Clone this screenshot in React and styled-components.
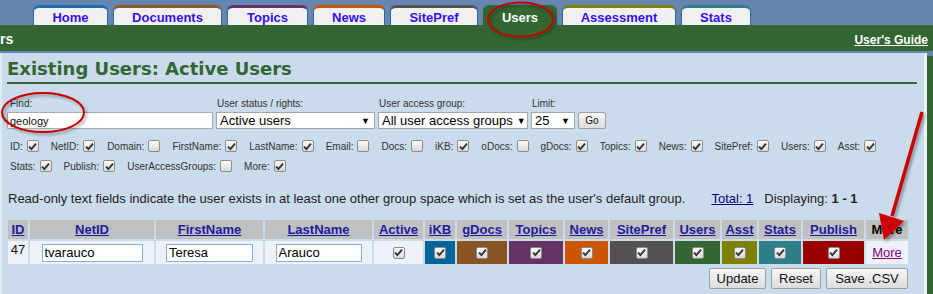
import React from 'react';
import styled, { createGlobalStyle } from 'styled-components';

const GlobalStyle = createGlobalStyle`
  body { margin:0; font-family:"Liberation Sans", Arial, sans-serif; background:#6685b1; }
`;

const tabs = [
  { name: 'Home', color: '#1f6ea8', w: 75 },
  { name: 'Documents', color: '#8b5a2b', w: 109 },
  { name: 'Topics', color: '#663366', w: 81 },
  { name: 'News', color: '#cc5500', w: 72 },
  { name: 'SitePref', color: '#555555', w: 88 },
  { name: 'Users', color: '#336633', w: 74, active: true },
  { name: 'Assessment', color: '#808000', w: 114 },
  { name: 'Stats', color: '#2f7f8c', w: 70 },
];

const toggles = [
  ['ID', true], ['NetID', true], ['Domain', false], ['FirstName', true], ['LastName', true],
  ['Email', false], ['Docs', false], ['iKB', true], ['oDocs', false], ['gDocs', true],
  ['Topics', true], ['News', true], ['SitePref', true], ['Users', true], ['Asst', true],
  ['Stats', true], ['Publish', true], ['UserAccessGroups', false], ['More', true],
];

const cols = [
  { key: 'ID', w: 20 },
  { key: 'NetID', w: 124, input: 'tvarauco', iw: 101 },
  { key: 'FirstName', w: 107, input: 'Teresa', iw: 87 },
  { key: 'LastName', w: 107, input: 'Arauco', iw: 86 },
  { key: 'Active', w: 49, check: true },
  { key: 'iKB', w: 30, check: true, bg: '#006699' },
  { key: 'gDocs', w: 50, check: true, bg: '#885522' },
  { key: 'Topics', w: 54, check: true, bg: '#663366' },
  { key: 'News', w: 43, check: true, bg: '#cc5500' },
  { key: 'SitePref', w: 63, check: true, bg: '#565151' },
  { key: 'Users', w: 45, check: true, bg: '#336633' },
  { key: 'Asst', w: 35, check: true, bg: '#808000' },
  { key: 'Stats', w: 42, check: true, bg: '#2f7f8a' },
  { key: 'Publish', w: 61, check: true, bg: '#990000' },
  { key: 'More', w: 42, more: true },
];

function CheckBox({ checked }) {
  return (
    <Box>
      {checked && (
        <svg width="9" height="9" viewBox="0 0 9 9">
          <path d="M1 4.6 L3.4 7 L8 1.6" fill="none" stroke="#333" strokeWidth="1.9" />
        </svg>
      )}
    </Box>
  );
}

function FakeSelect({ value, w }) {
  return (
    <SelectBox style={{ width: w }}>
      <span>{value}</span>
      <Arrow>▼</Arrow>
    </SelectBox>
  );
}

export default function App() {
  return (
    <Page>
      <GlobalStyle />
      <TabBar>
        {tabs.map(t => (
          <Tab key={t.name} $color={t.color} $active={t.active} style={{ width: t.w }}>{t.name}</Tab>
        ))}
      </TabBar>
      <TitleBar>
        <PageName>rs</PageName>
        <Guide href="#">User's Guide</Guide>
      </TitleBar>
      <Main>
        <Panel>
          <Heading>Existing Users: Active Users</Heading>

          <Filters>
            <Field style={{ width: 206 }}>
              <Label $indent={3}>Find:</Label>
              <TextInput defaultValue="geology" />
            </Field>
            <Field style={{ width: 159 }}>
              <Label>User status / rights:</Label>
              <FakeSelect value="Active users" w={159} />
            </Field>
            <Field style={{ width: 150 }}>
              <Label>User access group:</Label>
              <FakeSelect value="All user access groups" w={150} />
            </Field>
            <Field style={{ width: 44 }}>
              <Label>Limit:</Label>
              <FakeSelect value="25" w={44} />
            </Field>
            <GoButton>Go</GoButton>
          </Filters>

          <Toggles>
            {toggles.map(([name, on]) => (
              <Toggle key={name}>
                {name}:<CheckBox checked={on} />
              </Toggle>
            ))}
          </Toggles>

          <Note>
            Read-only text fields indicate the user exists in at least one other group space which is set as the user's default group.
            <TotalLink href="#">Total: 1</TotalLink>
            <span>Displaying: <b>1 - 1</b></span>
          </Note>

          <Table>
            <colgroup>
              {cols.map(c => <col key={c.key} style={{ width: c.w }} />)}
            </colgroup>
            <thead>
              <tr>
                {cols.map(c => (
                  <Th key={c.key}>{c.more ? 'More' : <a href="#">{c.key}</a>}</Th>
                ))}
              </tr>
            </thead>
            <tbody>
              <tr>
                {cols.map(c => (
                  <Td key={c.key} $bg={c.bg} $top={c.key === 'ID'}>
                    {c.key === 'ID' && '47'}
                    {c.input && <CellInput defaultValue={c.input} style={{ width: c.iw }} />}
                    {c.check && <CheckBox checked />}
                    {c.more && <MoreLink href="#">More</MoreLink>}
                  </Td>
                ))}
              </tr>
            </tbody>
          </Table>

          <Actions>
            <Button style={{ width: 57 }}>Update</Button>
            <Button style={{ width: 50 }}>Reset</Button>
            <Button style={{ width: 82 }}>Save .CSV</Button>
          </Actions>
        </Panel>
        <Side />
      </Main>

      <Marks width="933" height="294" viewBox="0 0 933 294">
        <defs>
          <filter id="sh" x="-20%" y="-20%" width="140%" height="140%">
            <feDropShadow dx="2" dy="2" stdDeviation="1.5" floodColor="#000" floodOpacity="0.35" />
          </filter>
        </defs>
        <g filter="url(#sh)" fill="none" stroke="#c40000" strokeWidth="2">
          <ellipse cx="520.5" cy="19.5" rx="32.5" ry="17" />
          <ellipse cx="43" cy="112.5" rx="41" ry="19.5" />
        </g>
        <g filter="url(#sh)">
          <line x1="922" y1="112" x2="892" y2="216" stroke="#cc0000" strokeWidth="3.5" />
          <polygon points="884,240 879,213 904,221" fill="#cc0000" />
        </g>
      </Marks>
    </Page>
  );
}

const Page = styled.div`
  position: relative;
  width: 933px;
  height: 294px;
  overflow: hidden;
  background: #6685b1;
`;

const TabBar = styled.div`
  display: flex;
  gap: 5px;
  height: 25px;
  box-sizing: border-box;
  padding: 5px 0 0 33px;
`;

const Tab = styled.div`
  height: 20px;
  box-sizing: border-box;
  display: flex;
  align-items: center;
  justify-content: center;
  border-top: 3px solid ${({ $color }) => $color};
  border-left: 1px solid ${({ $active }) => ($active ? '#336633' : '#2a6aa3')};
  border-right: 1px solid ${({ $active }) => ($active ? '#336633' : '#2a6aa3')};
  border-radius: 6px 6px 0 0;
  background: ${({ $active }) => ($active ? '#336633' : '#f0f0f0')};
  color: ${({ $active }) => ($active ? '#ffffff' : '#3311ee')};
  font: bold 13px "Liberation Sans", Arial, sans-serif;
  padding-top: 1px;
`;

const TitleBar = styled.div`
  height: 26px;
  background: #336633;
  display: flex;
  align-items: center;
  justify-content: space-between;
  margin-bottom: 2px;
  padding-right: 5px;
`;

const PageName = styled.span`
  color: #fff;
  font: bold 14px "Liberation Sans", Arial, sans-serif;
  padding-top: 2px;
`;

const Guide = styled.a`
  color: #fff;
  font: bold 12px "Liberation Sans", Arial, sans-serif;
  text-decoration: underline;
  padding-top: 3px;
`;

const Main = styled.div`
  display: flex;
  height: 241px;
`;

const Panel = styled.div`
  width: 927px;
  box-sizing: border-box;
  background: #cadbeb;
  border-left: 2px solid #e2eaf3;
  border-right: 3px solid #eef2f6;
  padding: 4px 7px 0 5px;
`;

const Side = styled.div`
  flex: 1;
  background: #336633;
  margin-top: 3px;
`;

const Heading = styled.h2`
  margin: 0;
  font: bold 18px "DejaVu Sans", Verdana, sans-serif;
  color: #336633;
  line-height: 22px;
  padding-top: 1px;
  padding-bottom: 2px;
  border-bottom: 2px solid #336633;
`;

const Filters = styled.div`
  display: flex;
  align-items: flex-end;
  gap: 3px;
  margin-top: 14px;
`;

const Field = styled.div`
  display: flex;
  flex-direction: column;
`;

const Label = styled.label`
  font-size: 10px;
  color: #333;
  line-height: 12px;
  margin: 0 0 2px ${({ $indent }) => $indent || 1}px;
`;

const TextInput = styled.input`
  box-sizing: border-box;
  width: 206px;
  height: 17px;
  border: 1px solid #aaa;
  background: #fff;
  padding: 0 2px;
  font: 11px "Liberation Sans", Arial, sans-serif;
  color: #111;
  outline: none;
`;

const SelectBox = styled.div`
  box-sizing: border-box;
  height: 17px;
  border: 1px solid #a6a6a6;
  background: #fff;
  display: flex;
  align-items: center;
  justify-content: space-between;
  padding: 0 4px 0 3px;
  font-size: 13px;
  color: #000;
  white-space: nowrap;
  overflow: hidden;
`;

const Arrow = styled.span`
  font-size: 9px;
  margin-left: 4px;
`;

const GoButton = styled.button`
  width: 28px;
  height: 17px;
  padding: 0;
  font: 10px "Liberation Sans", Arial, sans-serif;
  color: #111;
  border: 1px solid #a0a0a0;
  border-radius: 2px;
  background: linear-gradient(#f6f6f6, #dedede);
`;

const Toggles = styled.div`
  display: flex;
  flex-wrap: wrap;
  row-gap: 7px;
  padding-left: 3px;
  margin-top: 11px;
`;

const Toggle = styled.span`
  display: flex;
  align-items: center;
  gap: 4px;
  margin-right: 12px;
  font-size: 10px;
  color: #333;
  height: 12px;
  line-height: 12px;
  padding-top: 1px;
`;

const Box = styled.span`
  display: inline-flex;
  align-items: center;
  justify-content: center;
  width: 12px;
  height: 12px;
  box-sizing: border-box;
  border: 1px solid #8c8c8c;
  border-radius: 2px;
  background: linear-gradient(#fbfbfb, #d9d9d9);
  vertical-align: middle;
  margin-top: -2px;
`;

const Note = styled.div`
  margin: 18px 0 0 1px;
  font-size: 13px;
  color: #222;
  line-height: 16px;
  display: flex;
  white-space: nowrap;
  span { margin-left: 11px; }
`;

const TotalLink = styled.a`
  color: #000080;
  margin-left: 26px;
`;

const Table = styled.table`
  table-layout: fixed;
  width: 904px;
  border-collapse: separate;
  border-spacing: 2px;
  margin: 11px 0 0 -1px;
  font-size: 13px;
`;

const Th = styled.th`
  background: #c0c0c0;
  height: 19px;
  padding: 0;
  font: bold 13px "Liberation Sans", Arial, sans-serif;
  color: #000;
  text-align: center;
  a { color: #1c1c9c; text-decoration: underline; }
`;

const Td = styled.td`
  background: ${({ $bg }) => $bg || '#eef2f8'};
  height: 22px;
  padding: ${({ $top }) => ($top ? '1px 0 0' : '0')};
  text-align: center;
  vertical-align: ${({ $top }) => ($top ? 'top' : 'middle')};
  color: #111;
`;

const CellInput = styled.input`
  box-sizing: border-box;
  height: 18px;
  border: 1px solid #7eb4ea;
  background: #fff;
  padding: 0 2px;
  font: 13px "Liberation Sans", Arial, sans-serif;
  color: #000;
  outline: none;
  vertical-align: middle;
`;

const MoreLink = styled.a`
  color: #800080;
  text-decoration: underline;
`;

const Actions = styled.div`
  display: flex;
  justify-content: flex-end;
  gap: 5px;
  margin: 2px 9px 0 0;
`;

const Button = styled.button`
  height: 21px;
  padding: 0;
  font: 13px "Liberation Sans", Arial, sans-serif;
  color: #111;
  border: 1px solid #a0a0a0;
  border-radius: 2px;
  background: linear-gradient(#f7f7f7, #dcdcdc);
`;

const Marks = styled.svg`
  position: absolute;
  top: 0;
  left: 0;
  pointer-events: none;
`;
